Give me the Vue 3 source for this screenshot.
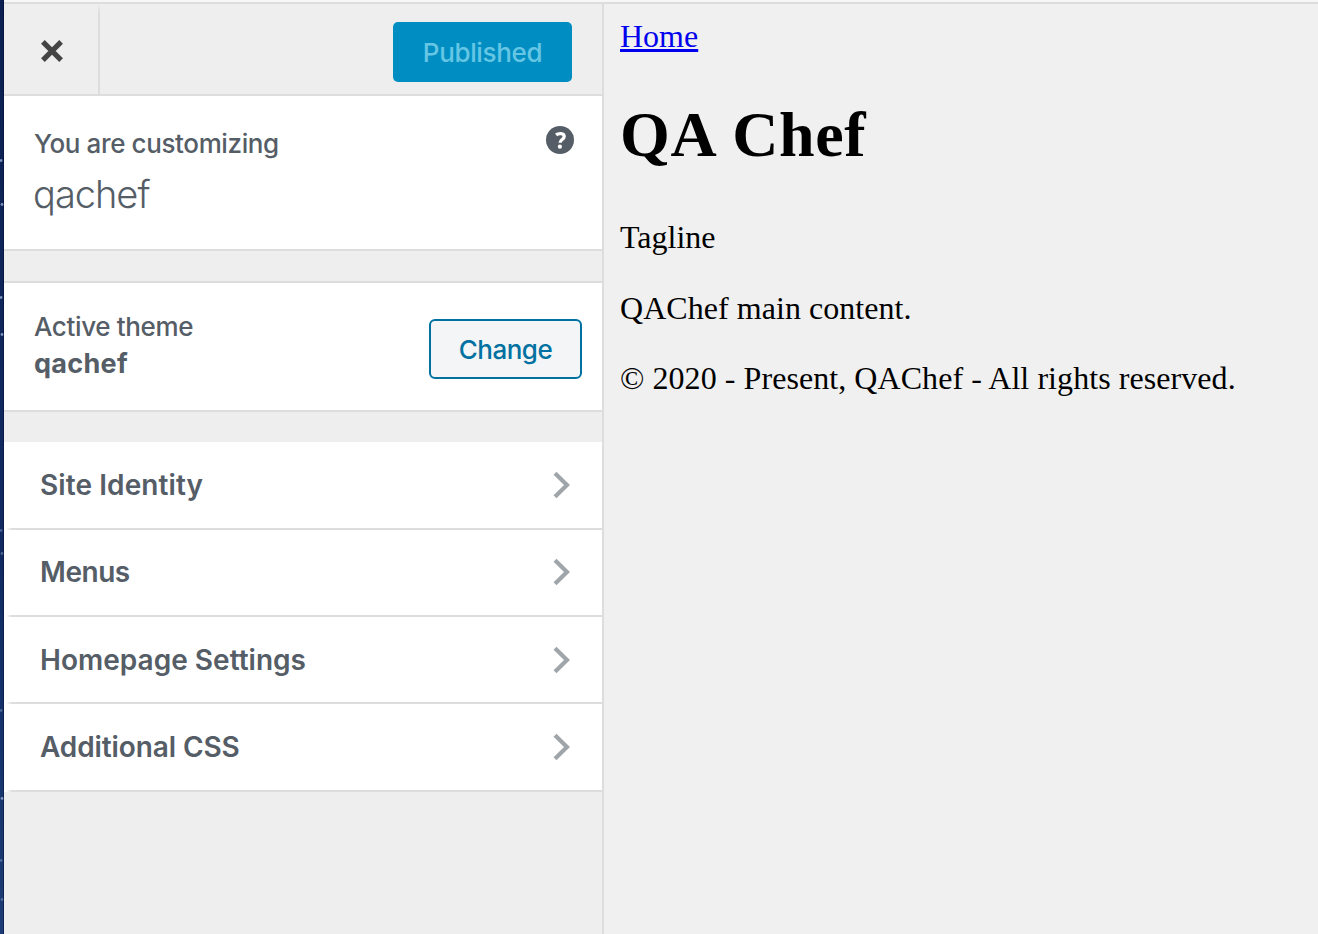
<script setup>
const sections = [
  { label: 'Site Identity', cls: 'identity' },
  { label: 'Menus', cls: 'menus' },
  { label: 'Homepage Settings', cls: 'homepage' },
  { label: 'Additional CSS', cls: 'css' },
]
const stars = [160, 204, 297, 334, 530, 553, 710, 798, 860, 899]
</script>

<template>
  <div class="window">
    <div class="desktop">
      <svg width="4" height="934" viewBox="0 0 4 934">
        <circle v-for="(y, i) in stars" :key="y" :cx="i % 2 ? 2 : 1" :cy="y + 0.5" r="1.4" fill="#8fa6cb" :opacity="i < 4 || i === 7 ? 0.85 : 0.45" />
      </svg>
    </div>
    <div class="browser">
      <div class="toolbar"></div>
      <div class="content">
        <aside class="sidebar">
          <header class="actions">
            <button class="close" aria-label="Close">
              <svg width="24" height="24" viewBox="0 0 24 24"><path d="M2.9 2.9 21.1 21.1M21.1 2.9 2.9 21.1" stroke="#444" stroke-width="5.2" /></svg>
            </button>
            <button class="published"><span>Published</span></button>
          </header>
          <section class="info">
            <div>
              <div class="note"><span>You are customizing</span></div>
              <div class="site"><span>qachef</span></div>
            </div>
            <svg class="help" width="28" height="28" viewBox="0 0 28 28">
              <circle cx="14" cy="14" r="14" fill="#555d66" />
              <path d="M10.1 8.9C12.3 7.1 18.2 6.7 18.2 10.4c0 3-4.1 3.2-4.1 6.4" fill="none" stroke="#fff" stroke-width="3.3" />
              <circle cx="13.9" cy="20.7" r="2.1" fill="#fff" />
            </svg>
          </section>
          <section class="theme">
            <div>
              <div class="theme-label"><span>Active theme</span></div>
              <div class="theme-name"><span>qachef</span></div>
            </div>
            <button class="change"><span>Change</span></button>
          </section>
          <ul class="list">
            <li v-for="s in sections" :key="s.label" :class="s.cls">
              <span>{{ s.label }}</span>
              <svg width="18" height="28" viewBox="0 0 18 28"><path d="M2 2.2 14 14 2 25.8" fill="none" stroke="#a0a5aa" stroke-width="4.2" /></svg>
            </li>
          </ul>
        </aside>
        <main class="preview">
          <a href="#">Home</a>
          <h1>QA Chef</h1>
          <p class="tagline">Tagline</p>
          <p class="body">QAChef main content.</p>
          <p class="copy">© 2020 - Present, QAChef - All rights reserved.</p>
        </main>
      </div>
    </div>
  </div>
</template>

<style>
body { margin: 0; overflow: hidden; }
</style>

<style scoped>
* { box-sizing: border-box; }
.window { display: flex; width: 1318px; height: 934px; }
.desktop { width: 4px; background: linear-gradient(90deg, transparent 75%, rgba(0, 0, 30, .4) 75%), linear-gradient(#0b2051, #112b62 60%, #1b3c76); }
.desktop svg { display: block; }
.browser { flex: 1; display: flex; flex-direction: column; }
.toolbar { height: 4px; background: #f7f7f7; border-bottom: 2px solid #ddd; }
.content { flex: 1; display: flex; }
.sidebar { width: 600px; background: #eee; border-right: 2px solid #ddd; font-family: Inter, "Liberation Sans", sans-serif; color: #555d66; }
button { padding: 0; border: 0; font-family: inherit; }
span { white-space: nowrap; }
.actions { height: 92px; display: flex; justify-content: space-between; border-bottom: 2px solid #ddd; }
.close { width: 96px; background: linear-gradient(transparent, #ddd 8px) right / 2px 100% no-repeat #eee; display: flex; align-items: center; justify-content: center; padding: 4px 1px 0 0; }
.published { width: 179px; height: 60px; margin: 18px 30px 0 0; padding-top: 2px; border-radius: 5px; background: #008ec2; color: #66c6e4; font-size: 26px; font-weight: 450; line-height: 58px; letter-spacing: -.35px; }
.info { height: 155px; padding: 30px 28px 0 30px; display: flex; justify-content: space-between; background: #fff; border-bottom: 2px solid #ddd; }
.note { font-size: 26px; font-weight: 450; line-height: 36px; letter-spacing: -.38px; }
.site { font-size: 38px; line-height: 54px; font-weight: 300; margin: 5px 0 0 -1px; letter-spacing: -1px; }
.theme { height: 131px; margin-top: 30px; padding: 26px 20px 0 30px; display: flex; justify-content: space-between; background: #fff; border-top: 2px solid #ddd; border-bottom: 2px solid #ddd; }
.theme-label { font-size: 26px; font-weight: 450; line-height: 36px; letter-spacing: -.36px; }
.theme-name { font-size: 27px; line-height: 38px; font-weight: 650; letter-spacing: .3px; }
.change { width: 153px; height: 60px; margin-top: 10px; padding-top: 2px; border: 2px solid #0071a1; border-radius: 6px; background: #f3f5f6; color: #0071a1; font-size: 26px; font-weight: 450; line-height: 54px; letter-spacing: -.5px; }
.list { list-style: none; margin: 30px 0 0; padding: 0; background: #fff; }
.list li { height: 87px; padding: 0 31px 2px 36px; display: flex; align-items: center; justify-content: space-between; font-size: 28px; font-weight: 630; letter-spacing: .02px; background: linear-gradient(90deg, transparent 2px, #ddd 8px) bottom / 100% 2px no-repeat; }
.list li:first-child, .list li:last-child { height: 88px; }
.list .identity { letter-spacing: .1px; }
.list .menus { padding-bottom: 3px; letter-spacing: -.45px; }
.list .css { letter-spacing: -.1px; }
.preview { flex: 1; background: #f0f0f0; padding: 14px 16px; font-family: "Liberation Serif", serif; font-size: 32px; line-height: 37px; color: #000; }
.preview a { display: block; width: max-content; color: #00e; text-decoration: underline; }
h1 { margin: 43px 0 47px; font-size: 64px; line-height: 74px; letter-spacing: .6px; word-spacing: 2px; }
p { margin: 0 0 34px; }
.body { margin-bottom: 33px; letter-spacing: .05px; }
.copy { letter-spacing: .065px; }
</style>
